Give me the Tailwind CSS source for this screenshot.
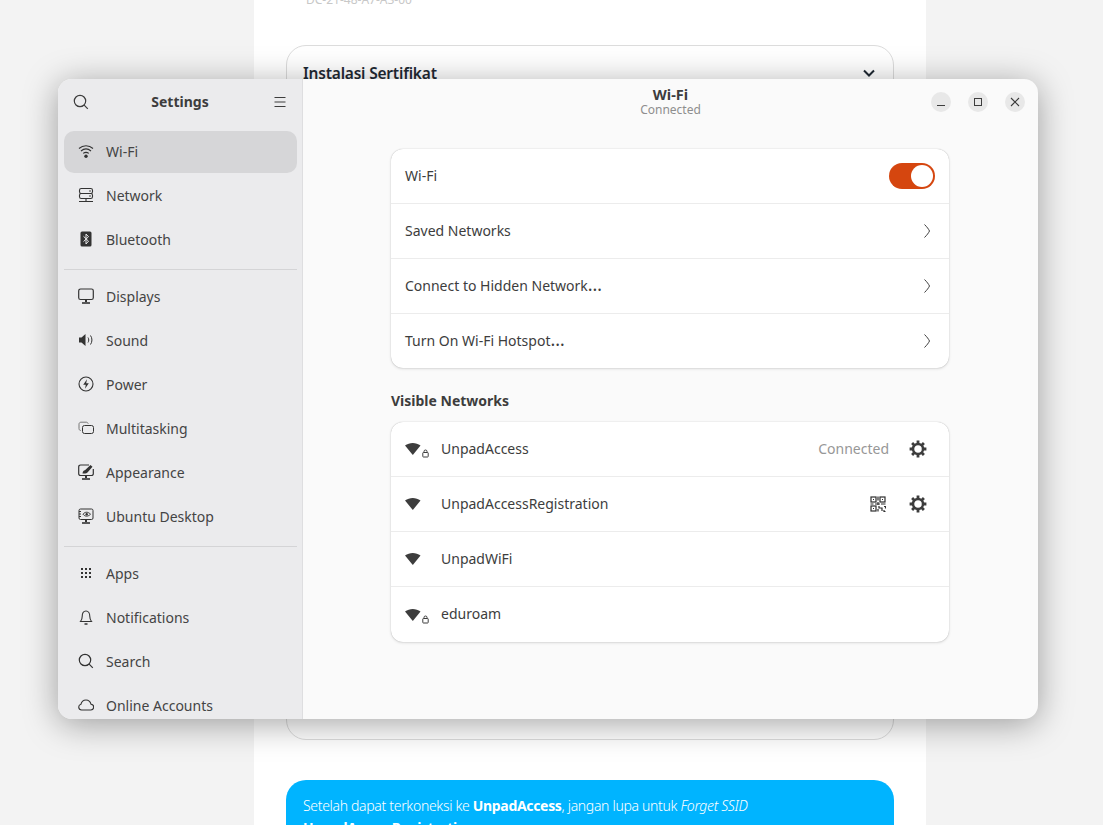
<!DOCTYPE html>
<html lang="en">
<head>
    <meta charset="UTF-8">
    <title>Wi-Fi settings</title>
    <script src="https://cdn.jsdelivr.net/npm/@tailwindcss/browser@4"></script>
</head>
<body class="relative w-[1103px] h-[825px] overflow-hidden bg-[#f3f3f3] font-['Noto_Sans',sans-serif]">

<!-- page behind the window -->
<div class="w-[672px] h-[825px] ml-[254px] bg-white px-[32px] overflow-hidden">
    <p class="mt-[-9px] ml-[20px] h-[54px] text-[12px] leading-[18px] text-[#c8c8c8]">DC-21-48-A7-A3-00</p>
    <div class="h-[695px] w-[608px] rounded-[20px] border border-[#dcdcdc] px-[16px] pt-[15px]">
        <div class="flex items-center justify-between pr-[1px]">
            <span class="text-[15.5px] leading-[24px] font-semibold tracking-[-0.2px] text-[#1f2933]">Instalasi Sertifikat</span>
            <svg class="w-[14px] h-[14px]" viewBox="0 0 14 14" fill="none" stroke="#1f2933" stroke-width="2"><path d="M2 4.5l5 5 5-5"/></svg>
        </div>
    </div>
    <div class="mt-[40px] w-[608px] h-[100px] rounded-[20px] bg-[#00b4ff] px-[17px] pt-[15px] text-[14px] leading-[22px] font-light tracking-[-0.32px] text-white">
        Setelah dapat terkoneksi ke <b class="font-bold">UnpadAccess</b>, jangan lupa untuk <i>Forget SSID</i><br><b class="font-bold">UnpadAccessRegistration</b>.
    </div>
</div>

<!-- settings window -->
<div class="absolute left-[58px] top-[79px] w-[980px] h-[640px] flex rounded-[14px] overflow-hidden bg-[#fafafa] shadow-[0_5px_34px_rgba(0,0,0,0.36)] text-[#3d3d3d]">

    <!-- sidebar -->
    <aside class="w-[245px] shrink-0 bg-[#ebebed] border-r border-[#dedee0] overflow-hidden">
        <div class="h-[46px] flex items-center justify-between pl-[15px] pr-[16px]">
            <svg class="w-[16px] h-[16px]" viewBox="0 0 16 16" fill="none" stroke="#3d3d3d" stroke-width="1.2"><circle cx="7" cy="7" r="5.7"/><path d="M11.2 11.2l3.6 3.6"/></svg>
            <span class="text-[14px] font-bold text-[#3d3d3d] pb-[2px] mr-[3px]">Settings</span>
            <svg class="w-[12px] h-[12px]" viewBox="0 0 12 12" stroke="#3d3d3d" stroke-width="1"><path d="M0.5 1.5h11M0.5 6h11M0.5 10.5h11"/></svg>
        </div>
        <nav class="pl-[6px] pr-[5px] pt-[6px] text-[14px] text-[#444]">
            <a class="h-[42px] mb-[2px] flex items-center gap-[12px] pl-[14px] pb-[2px] rounded-[10px] bg-[#d6d6d8]">
                <svg class="w-[16px] h-[16px]" viewBox="0 0 16 16" fill="none" stroke="#333" stroke-width="1.1"><path d="M1 5.5c4-3.6 10-3.6 14 0M3 8c3-2.600 7-2.600 10 0M5.200 10.400c1.700-1.300 3.900-1.300 5.600 0"/><circle cx="8" cy="13.200" r="1.700" fill="#333" stroke="none"/></svg>
                Wi-Fi
            </a>
            <a class="h-[42px] mb-[2px] flex items-center gap-[12px] pl-[14px] pb-[2px]">
                <svg class="w-[16px] h-[16px]" viewBox="0 0 16 16" fill="none" stroke="#333" stroke-width="1.1"><rect x="1.5" y="1.5" width="13" height="5" rx="1.8"/><rect x="1.5" y="6.5" width="13" height="5" rx="1.8"/><path d="M1 14.5h14M8 11.5v3"/><circle cx="12" cy="4" r=".8" fill="#333" stroke="none"/><circle cx="12" cy="9" r=".8" fill="#333" stroke="none"/></svg>
                Network
            </a>
            <a class="h-[42px] flex items-center gap-[12px] pl-[14px] pb-[2px]">
                <svg class="w-[16px] h-[16px]" viewBox="0 0 16 16"><rect x="2.5" y="0.5" width="11" height="15" rx="1.5" fill="#333"/><path d="M5.5 5.3l5 4.9L8 13V3l2.5 2.7-5 4.9" fill="none" stroke="#ebebed" stroke-width="1"/></svg>
                Bluetooth
            </a>
            <div class="h-px bg-[#d4d4d6] mt-[8px] mb-[6px]"></div>
            <a class="h-[42px] mb-[2px] flex items-center gap-[12px] pl-[14px] pb-[2px]">
                <svg class="w-[16px] h-[16px]" viewBox="0 0 16 16" fill="none" stroke="#333" stroke-width="1.2"><rect x="0.7" y="1" width="14.6" height="10.5" rx="1.8"/><path d="M8 11.5v2.5" stroke-width="2"/><path d="M4 15h8" stroke-width="1.6"/></svg>
                Displays
            </a>
            <a class="h-[42px] mb-[2px] flex items-center gap-[12px] pl-[14px] pb-[2px]">
                <svg class="w-[16px] h-[16px]" viewBox="0 0 16 16" fill="none" stroke="#333" stroke-width="1"><path d="M1 5.5h2.500L7.500 2v12L3.500 10.500H1z" fill="#333" stroke="none"/><path d="M10 5.500c1 1.500 1 3.500 0 5M12.500 3.500c1.900 2.700 1.900 6.300 0 9"/></svg>
                Sound
            </a>
            <a class="h-[42px] mb-[2px] flex items-center gap-[12px] pl-[14px] pb-[2px]">
                <svg class="w-[16px] h-[16px]" viewBox="0 0 16 16" fill="none" stroke="#333" stroke-width="1.1"><circle cx="8" cy="8" r="7"/><path d="M9 3.200L5.200 8.800h2.600L7 12.800l3.800-5.600H8.200z" fill="#333" stroke="none"/></svg>
                Power
            </a>
            <a class="h-[42px] mb-[2px] flex items-center gap-[12px] pl-[14px] pb-[2px]">
                <svg class="w-[16px] h-[16px]" viewBox="0 0 16 16" fill="none" stroke="#333" stroke-width="1"><rect x="4.500" y="5.500" width="11" height="8" rx="2"/><path d="M2.800 10.500C1.500 10.400 1 9.600 1 8.600V4.200C1 3 1.800 2.200 3 2.200h5.200c1 0 1.700.5 2 1.600" stroke="#777"/></svg>
                Multitasking
            </a>
            <a class="h-[42px] mb-[2px] flex items-center gap-[12px] pl-[14px] pb-[2px]">
                <svg class="w-[16px] h-[16px]" viewBox="0 0 16 16" fill="none" stroke="#333" stroke-width="1.2"><path d="M11 1H2.500A1.800 1.800 0 0 0 .7 2.800v6.900a1.800 1.800 0 0 0 1.800 1.800h11a1.800 1.800 0 0 0 1.800-1.800V5"/><path d="M8 11.500v2.500" stroke-width="2"/><path d="M4 15h8" stroke-width="1.600"/><path d="M4.500 9.500c.2-2 1-3 2.400-3.200L12.500 1l2 1.800-4.800 5.400c-.6 1.200-2.800 1.600-5.200 1.300z" fill="#333" stroke="none"/></svg>
                Appearance
            </a>
            <a class="h-[42px] flex items-center gap-[12px] pl-[14px] pb-[2px]">
                <svg class="w-[16px] h-[16px]" viewBox="0 0 16 16" fill="none" stroke="#333" stroke-width="1"><rect x="1" y="1" width="14" height="10.500" rx="1.500"/><path d="M1 3.500h2M1 6h2M1 8.500h2"/><path d="M5 6.200c2-2.600 5-2.600 7.500 0-2.500 2.600-5.500 2.600-7.500 0z"/><circle cx="8.700" cy="6.200" r="1.200" fill="#333" stroke="none"/><path d="M8 11.500v2.500" stroke-width="2"/><path d="M4 15h8" stroke-width="1.600"/></svg>
                Ubuntu Desktop
            </a>
            <div class="h-px bg-[#d4d4d6] mt-[8px] mb-[6px]"></div>
            <a class="h-[42px] mb-[2px] flex items-center gap-[12px] pl-[14px] pb-[2px]">
                <svg class="w-[16px] h-[16px]" viewBox="0 0 16 16" fill="#333"><rect x="3" y="3" width="2" height="2"/><rect x="7" y="3" width="2" height="2"/><rect x="11" y="3" width="2" height="2"/><rect x="3" y="7" width="2" height="2"/><rect x="7" y="7" width="2" height="2"/><rect x="11" y="7" width="2" height="2"/><rect x="3" y="11" width="2" height="2"/><rect x="7" y="11" width="2" height="2"/><rect x="11" y="11" width="2" height="2"/></svg>
                Apps
            </a>
            <a class="h-[42px] mb-[2px] flex items-center gap-[12px] pl-[14px] pb-[2px]">
                <svg class="w-[16px] h-[16px]" viewBox="0 0 16 16" fill="none" stroke="#333" stroke-width="1.1"><path d="M2.500 12.500h11c-1.200-1.400-1.700-2.400-1.700-5C11.800 4.500 10.400 2 8 2S4.200 4.500 4.200 7.500c0 2.600-.5 3.600-1.700 5z"/><path d="M6.500 15h3" stroke-width="1.500"/></svg>
                Notifications
            </a>
            <a class="h-[42px] mb-[2px] flex items-center gap-[12px] pl-[14px] pb-[2px]">
                <svg class="w-[16px] h-[16px]" viewBox="0 0 16 16" fill="none" stroke="#333" stroke-width="1.2"><circle cx="7" cy="7" r="5.700"/><path d="M11.200 11.200l3.600 3.600"/></svg>
                Search
            </a>
            <a class="h-[42px] flex items-center gap-[12px] pl-[14px] pb-[2px]">
                <svg class="w-[16px] h-[16px]" viewBox="0 0 16 16" fill="none" stroke="#333" stroke-width="1.1"><path d="M4 13H3.500a2.900 2.900 0 0 1-.6-5.700C3.500 4.700 5.500 3 8 3s4.300 1.500 5 4.200A2.900 2.900 0 0 1 12.500 13z"/></svg>
                Online Accounts
            </a>
        </nav>
    </aside>

    <!-- main pane -->
    <main class="flex-1 min-w-0">
        <header class="h-[46px] relative flex flex-col items-center pt-[6px]">
            <span class="text-[14.5px] leading-[18px] font-bold text-[#3d3d3d]">Wi-Fi</span>
            <span class="text-[12px] leading-[14px] text-[#8e8e8e]">Connected</span>
            <div class="absolute right-[13px] top-[13px] flex gap-[17px]">
                <button class="w-[20px] h-[20px] rounded-full bg-[#e8e8e8] flex items-center justify-center">
                    <svg class="w-[10px] h-[10px]" viewBox="0 0 10 10" stroke="#3d3d3d" stroke-width="1"><path d="M1 8.500h8"/></svg>
                </button>
                <button class="w-[20px] h-[20px] rounded-full bg-[#e8e8e8] flex items-center justify-center">
                    <svg class="w-[10px] h-[10px]" viewBox="0 0 10 10" fill="none" stroke="#3d3d3d" stroke-width="1"><rect x="1.500" y="1.500" width="7" height="7"/></svg>
                </button>
                <button class="w-[20px] h-[20px] rounded-full bg-[#e8e8e8] flex items-center justify-center">
                    <svg class="w-[10px] h-[10px]" viewBox="0 0 10 10" stroke="#3d3d3d" stroke-width="1.100"><path d="M1 1l8 8M9 1l-8 8"/></svg>
                </button>
            </div>
        </header>

        <div class="w-[558px] ml-[88px] pt-[24px] text-[14px] text-[#3d3d3d]">
            <div class="rounded-[12px] bg-white shadow-[0_0_1px_rgba(0,0,0,0.3),0_1px_3px_rgba(0,0,0,0.12)]">
                <div class="h-[55px] flex items-center justify-between pl-[14px] pr-[14px] border-b border-[#ececec]">
                    <span class="mb-[2px]">Wi-Fi</span>
                    <div class="w-[46px] h-[26px] rounded-full bg-[#d5460f] flex items-center justify-end pr-[2px]">
                        <div class="w-[22px] h-[22px] rounded-full bg-white"></div>
                    </div>
                </div>
                <div class="h-[55px] flex items-center justify-between pl-[14px] pr-[18px] border-b border-[#ececec]">
                    <span class="mb-[2px]">Saved Networks</span>
                    <svg class="w-[8px] h-[16px]" viewBox="0 0 8 16" fill="none" stroke="#3d3d3d" stroke-width="1"><path d="M1.500 1.500c2.500 2.500 4 4.500 5 6.500-1 2-2.500 4-5 6.500"/></svg>
                </div>
                <div class="h-[55px] flex items-center justify-between pl-[14px] pr-[18px] border-b border-[#ececec]">
                    <span class="mb-[2px]">Connect to Hidden Network<span class="text-[18px] leading-none">…</span></span>
                    <svg class="w-[8px] h-[16px]" viewBox="0 0 8 16" fill="none" stroke="#3d3d3d" stroke-width="1"><path d="M1.500 1.500c2.500 2.500 4 4.500 5 6.500-1 2-2.500 4-5 6.500"/></svg>
                </div>
                <div class="h-[54px] flex items-center justify-between pl-[14px] pr-[18px]">
                    <span class="mb-[2px]">Turn On Wi-Fi Hotspot<span class="text-[18px] leading-none">…</span></span>
                    <svg class="w-[8px] h-[16px]" viewBox="0 0 8 16" fill="none" stroke="#3d3d3d" stroke-width="1"><path d="M1.500 1.500c2.500 2.500 4 4.500 5 6.500-1 2-2.500 4-5 6.500"/></svg>
                </div>
            </div>

            <h2 class="mt-[22px] mb-[11px] text-[14px] leading-[21px] font-bold text-[#3d3d3d]">Visible Networks</h2>

            <div class="rounded-[12px] bg-white shadow-[0_0_1px_rgba(0,0,0,0.3),0_1px_3px_rgba(0,0,0,0.12)]">
                <div class="h-[55px] flex items-center pl-[14px] pr-[22px] border-b border-[#ececec]">
                    <svg class="w-[26px] h-[16px] mr-[10px] mt-[2px]" viewBox="0 0 26 16"><path d="M0 3.500C4.500 0 11 0 15.500 3.500L7.800 13z" fill="#3d3d3d"/><path d="M19 10.500v-1a1.500 1.500 0 0 1 3 0v1" fill="none" stroke="#3d3d3d"/><rect x="17.800" y="10.500" width="5.400" height="4.500" rx=".6" fill="none" stroke="#3d3d3d"/></svg>
                    <span class="flex-1 mb-[2px]">UnpadAccess</span>
                    <span class="text-[#979797] mr-[20px] mb-[2px]">Connected</span>
                    <svg class="w-[18px] h-[18px]" viewBox="0 0 18 18" fill="none" stroke="#3d3d3d"><circle cx="9" cy="9" r="5" stroke-width="2.500"/><path d="M9 .6v3M9 14.400v3M.6 9h3M14.400 9h3M3.100 3.100l2.100 2.100M12.800 12.800l2.100 2.100M14.900 3.100l-2.100 2.100M5.200 12.800l-2.100 2.100" stroke-width="2.800"/></svg>
                </div>
                <div class="h-[55px] flex items-center pl-[14px] pr-[22px] border-b border-[#ececec]">
                    <svg class="w-[26px] h-[16px] mr-[10px] mt-[2px]" viewBox="0 0 26 16"><path d="M0 3.500C4.500 0 11 0 15.500 3.500L7.800 13z" fill="#3d3d3d"/></svg>
                    <span class="flex-1 mb-[2px]">UnpadAccessRegistration</span>
                    <svg class="w-[16px] h-[16px] mr-[23px]" viewBox="0 0 16 16" fill="none" stroke="#2e2e2e" stroke-width="1.200"><rect x="1" y="1" width="5" height="5"/><rect x="10" y="1" width="5" height="5"/><rect x="1" y="10" width="5" height="5"/><rect x="3" y="3" width="1" height="1" fill="#2e2e2e" stroke="none"/><rect x="12" y="3" width="1" height="1" fill="#2e2e2e" stroke="none"/><rect x="3" y="12" width="1" height="1" fill="#2e2e2e" stroke="none"/><path d="M8 .5v4M8 6v3M.5 8h3M5 8h5M11 8h4.500M9 10v2h3v3M14 10.500h1.500v2M8 13v2.500M14 14v1.500h1.500"/></svg>
                    <svg class="w-[18px] h-[18px]" viewBox="0 0 18 18" fill="none" stroke="#3d3d3d"><circle cx="9" cy="9" r="5" stroke-width="2.500"/><path d="M9 .6v3M9 14.400v3M.6 9h3M14.400 9h3M3.100 3.100l2.100 2.100M12.800 12.800l2.100 2.100M14.900 3.100l-2.100 2.100M5.200 12.800l-2.100 2.100" stroke-width="2.800"/></svg>
                </div>
                <div class="h-[55px] flex items-center pl-[14px] pr-[22px] border-b border-[#ececec]">
                    <svg class="w-[26px] h-[16px] mr-[10px] mt-[2px]" viewBox="0 0 26 16"><path d="M0 3.500C4.500 0 11 0 15.500 3.500L7.800 13z" fill="#3d3d3d"/></svg>
                    <span class="flex-1 mb-[2px]">UnpadWiFi</span>
                </div>
                <div class="h-[55px] flex items-center pl-[14px] pr-[22px]">
                    <svg class="w-[26px] h-[16px] mr-[10px] mt-[2px]" viewBox="0 0 26 16"><path d="M0 3.500C4.500 0 11 0 15.500 3.500L7.800 13z" fill="#3d3d3d"/><path d="M19 10.500v-1a1.500 1.500 0 0 1 3 0v1" fill="none" stroke="#3d3d3d"/><rect x="17.800" y="10.500" width="5.400" height="4.500" rx=".6" fill="none" stroke="#3d3d3d"/></svg>
                    <span class="flex-1 mb-[2px]">eduroam</span>
                </div>
            </div>
        </div>
    </main>
</div>
</body>
</html>
